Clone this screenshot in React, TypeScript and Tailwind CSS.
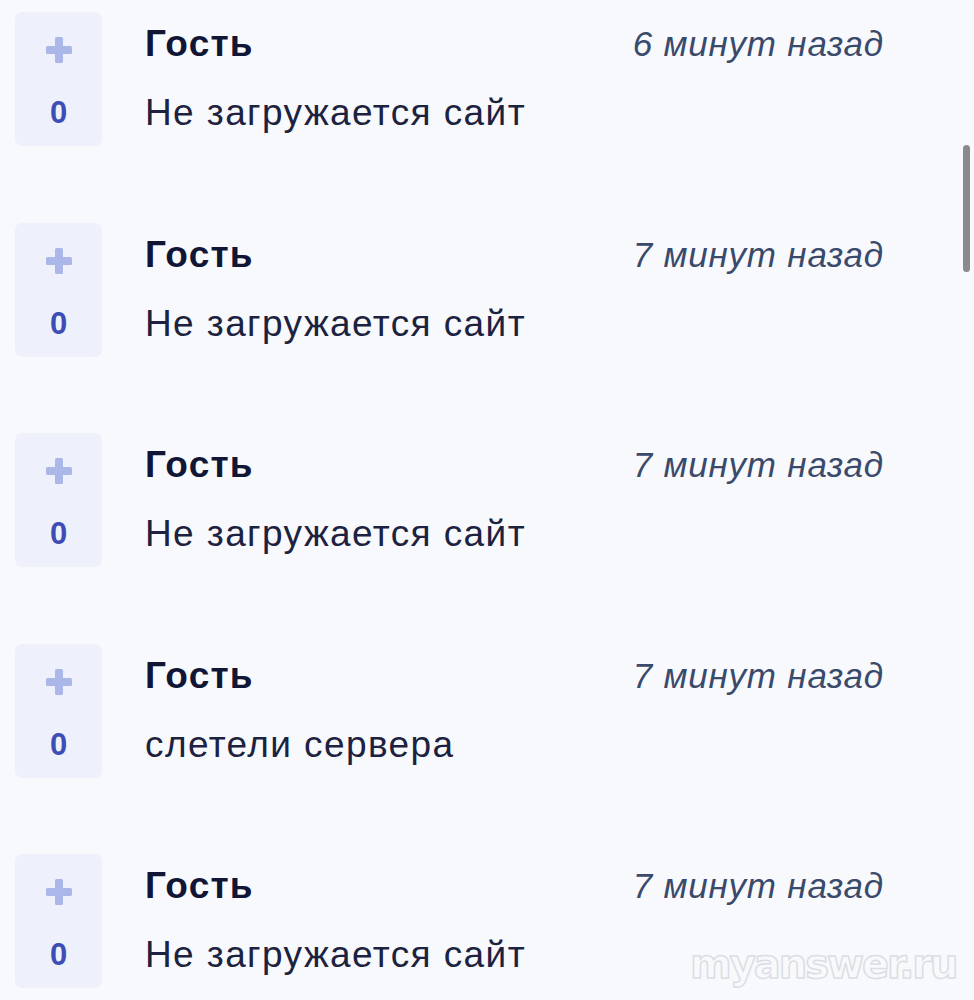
const items = [
  { name: "Гость", time: "6 минут назад", text: "Не загружается сайт", votes: 0 },
  { name: "Гость", time: "7 минут назад", text: "Не загружается сайт", votes: 0 },
  { name: "Гость", time: "7 минут назад", text: "Не загружается сайт", votes: 0 },
  { name: "Гость", time: "7 минут назад", text: "слетели сервера", votes: 0 },
  { name: "Гость", time: "7 минут назад", text: "Не загружается сайт", votes: 0 },
];

function PlusIcon() {
  return (
    <svg width="28" height="28" viewBox="0 0 28 28">
      <rect x="10" y="1" width="8" height="26" rx="1.5" fill="#abb6e9" />
      <rect x="1" y="10" width="26" height="8" rx="1.5" fill="#abb6e9" />
    </svg>
  );
}

function Answer({ item }: { item: (typeof items)[number] }) {
  return (
    <div className="flex">
      <div className="w-[87px] h-[134px] shrink-0 rounded-[7px] bg-[#eef1fb] flex flex-col items-center pt-[24px]">
        <PlusIcon />
        <div className="mt-[31px] text-[31px] leading-[36px] font-bold text-[#3e4db5]">{item.votes}</div>
      </div>
      <div className="flex-1 ml-[43px] pt-[12px]">
        <div className="flex justify-between items-center leading-[40px]">
          <span className="text-[37px] font-bold tracking-[1.2px] text-[#121636]">{item.name}</span>
          <span className="text-[35px] italic tracking-[0.8px] text-[#3a4a6c]">{item.time}</span>
        </div>
        <p className="mt-[29px] text-[37px] leading-[40px] tracking-[1.4px] text-[#1c2240]">{item.text}</p>
      </div>
    </div>
  );
}

export default function App() {
  return (
    <div className="relative w-[974px] h-[1000px] overflow-hidden bg-[#f8f9fc] font-['Liberation_Sans',Arial,sans-serif]">
      <div className="flex flex-col gap-[76.5px] pl-[15px] pr-[90px] pt-[12px]">
        {items.map((item, i) => (
          <Answer key={i} item={item} />
        ))}
      </div>
      {/* scrollbar thumb */}
      <div className="absolute left-[963px] top-[145px] w-[7px] h-[127px] rounded-full bg-[#8a8a8c]" />
      {/* watermark */}
      <div className="absolute left-[690px] top-[940px] text-[40px] leading-[48px] font-bold text-transparent [-webkit-text-stroke:1.5px_#dcdde2] font-['DejaVu_Sans',sans-serif] tracking-[-2px]">
        myanswer.ru
      </div>
    </div>
  );
}
